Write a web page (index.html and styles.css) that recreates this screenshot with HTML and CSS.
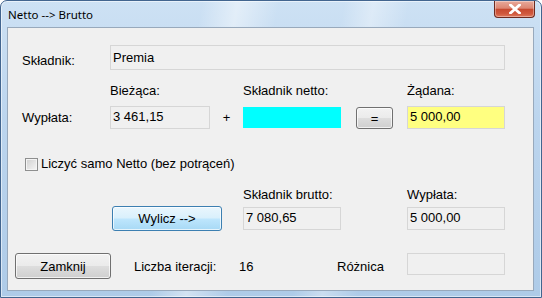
FILE: index.html
```html
<!DOCTYPE html>
<html lang="pl">
<head>
    <meta charset="UTF-8">
    <meta name="viewport" content="width=device-width, initial-scale=1.0">
    <title>Netto --> Brutto</title>
    <link rel="stylesheet" href="styles.css">
</head>
<body>
    <div class="window">
        <div class="titlebar">
            <div class="title">Netto --&gt; Brutto</div>
            <button class="close-btn" aria-label="Zamknij okno">
                <svg width="12" height="10" viewBox="0 0 12 10">
                    <path d="M1.5 1 L10.5 9 M10.5 1 L1.5 9" stroke="#fff" stroke-width="2.8" stroke-linecap="square"/>
                </svg>
            </button>
        </div>

        <div class="client">
            <!-- nazwa skladnika -->
            <div class="row row-name">
                <div class="label col-label">Składnik:</div>
                <div class="field field-wide">Premia</div>
            </div>

            <div class="row row-heads">
                <div class="col-label"></div>
                <div class="head head-current">Bieżąca:</div>
                <div class="head head-netto">Składnik netto:</div>
                <div class="head">Żądana:</div>
            </div>

            <div class="row row-calc">
                <div class="label col-label">Wypłata:</div>
                <div class="field field-num">3 461,15</div>
                <div class="plus">+</div>
                <div class="field-cyan"></div>
                <button class="btn btn-eq">=</button>
                <div class="field field-num field-yellow">5 000,00</div>
            </div>

            <label class="row row-check">
                <span class="checkbox"></span>
                <span>Liczyć samo Netto (bez potrąceń)</span>
            </label>

            <div class="row row-heads row-heads2">
                <div class="head head-brutto">Składnik brutto:</div>
                <div class="head">Wypłata:</div>
            </div>

            <div class="row row-result">
                <button class="btn btn-default btn-calc">Wylicz --&gt;</button>
                <div class="field field-num field-short">7 080,65</div>
                <div class="field field-num field-short field-last">5 000,00</div>
            </div>

            <div class="row row-bottom">
                <button class="btn btn-close">Zamknij</button>
                <div class="iter-label">Liczba iteracji:</div>
                <div class="iter-value">16</div>
                <div class="diff-label">Różnica</div>
                <div class="field field-short field-diff"></div>
            </div>
        </div>
    </div>
</body>
</html>
```

FILE: styles.css
```css
body {
    margin: 0;
    font-family: "Liberation Sans", Arial, sans-serif;
    font-size: 13px;
    line-height: 15px;
    color: #000;
    background-color: #fff;
}
.window {
    width: 542px;
    height: 298px;
    box-sizing: border-box;
    padding: 0 7px 6px 6px;
    border: 1px solid #42658f;
    border-radius: 7px 7px 0 0;
    background:
        linear-gradient(100deg, rgba(255,255,255,0) 34%, rgba(255,255,255,0.45) 40%, rgba(255,255,255,0) 47%,
                        rgba(255,255,255,0) 58%, rgba(255,255,255,0.35) 63%, rgba(255,255,255,0) 69%),
        linear-gradient(to bottom, #cde1f4 0%, #bcd5ee 40%, #aecbe8 100%);
    box-shadow: inset 0 0 0 1px rgba(255,255,255,0.55);
}
.titlebar {
    height: 26px;
    display: flex;
    align-items: flex-start;
}
.title {
    font-family: "Noto Sans", "Liberation Sans", sans-serif;
    font-size: 11.5px;
    line-height: 16px;
    padding: 6px 0 0 1px;
}
.close-btn {
    margin-left: auto;
    margin-right: -1px;
    width: 41px;
    height: 17px;
    padding: 0;
    border: 1px solid #6e2a1f;
    border-top: none;
    border-radius: 0 0 4px 4px;
    background: linear-gradient(to bottom, #e8aa9b 0%, #dd8672 45%, #c74a30 52%, #d0593e 80%, #e07a5e 100%);
    box-shadow: inset 0 0 0 1px rgba(255,255,255,0.35);
    display: flex;
    align-items: center;
    justify-content: center;
}
.client {
    height: 264px;
    box-sizing: border-box;
    background-color: #f0f0f0;
    border: 1px solid #98a9bc;
    padding-left: 14px;
}
.row {
    display: flex;
}
.col-label {
    width: 88px;
    flex: none;
}
.field {
    box-sizing: border-box;
    height: 23px;
    border: 1px solid #d6d6d6;
    background-color: #f0f0f0;
    padding: 3px 0 0 2px;
    white-space: nowrap;
}
.row-name {
    margin-top: 17px;
    height: 25px;
}
.row-name .label {
    padding-top: 8px;
}
.field-wide {
    width: 395px;
    height: 25px;
    padding-top: 4px;
}
.row-heads {
    margin-top: 13px;
    height: 15px;
}
.head-current {
    width: 133px;
}
.head-netto {
    width: 164px;
}
.row-calc {
    margin-top: 8px;
    height: 23px;
    align-items: flex-start;
}
.row-calc .label {
    padding-top: 4px;
}
.field-num {
    width: 100px;
    padding-top: 2px;
}
.plus {
    width: 33px;
    text-align: center;
    padding-top: 4px;
}
.field-cyan {
    width: 98px;
    height: 21px;
    margin-top: 1px;
    background-color: #00ffff;
}
.btn {
    box-sizing: border-box;
    font-family: "Liberation Sans", Arial, sans-serif;
    font-size: 13px;
    color: #000;
    padding: 0;
    border: 1px solid #707070;
    border-radius: 3px;
    background: linear-gradient(to bottom, #f2f2f2 0%, #ebebeb 48%, #dddddd 52%, #cfcfcf 100%);
    box-shadow: inset 0 0 0 1px rgba(255,255,255,0.7);
}
.btn-eq {
    width: 37px;
    height: 22px;
    margin: 1px 0 0 15px;
}
.field-yellow {
    width: 98px;
    margin-left: 14px;
    background-color: #ffff80;
}
.row-check {
    margin: 27px 0 0 3px;
    height: 15px;
    align-items: flex-start;
}
.checkbox {
    box-sizing: border-box;
    width: 13px;
    height: 13px;
    margin: 2px 3px 0 0;
    border: 1px solid #8e8f8f;
    background: linear-gradient(135deg, #cfcfcf, #f6f6f6);
    box-shadow: inset 0 0 0 1px #f4f4f4;
}
.row-heads2 {
    margin-top: 16px;
    padding-left: 221px;
}
.head-brutto {
    width: 164px;
}
.row-result {
    margin-top: 4px;
    height: 25px;
    align-items: center;
}
.btn-default {
    border-color: #3c7fb1;
    background: linear-gradient(to bottom, #eaf6fd 0%, #d9f0fc 48%, #bee6fd 52%, #a7d9f5 100%);
}
.btn-calc {
    width: 110px;
    height: 25px;
    margin-left: 90px;
}
.field-short {
    width: 98px;
}
.btn-calc + .field-short {
    margin-left: 21px;
}
.field-last {
    margin-left: 66px;
}
.row-bottom {
    margin: 22px 0 0 -7px;
    height: 26px;
    align-items: center;
}
.btn-close {
    width: 96px;
    height: 26px;
}
.iter-label {
    margin-left: 23px;
    width: 105px;
}
.iter-value {
    width: 98px;
}
.diff-label {
    width: 70px;
}
.field-diff {
    height: 22px;
    margin-top: -4px;
}
```
